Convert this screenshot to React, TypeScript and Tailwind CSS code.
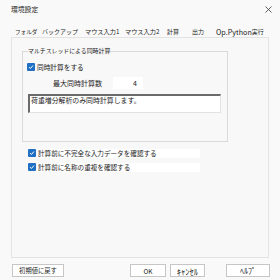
import React from "react";

const font = { fontFamily: '"Noto Sans CJK JP", "Noto Sans", sans-serif' };

function Check({ label, bg }: { label: string; bg?: boolean }) {
  return (
    <div className="flex items-center h-[10px]">
      <div className="w-[8px] h-[8px] rounded-[1px] bg-[#1f6fc5] flex items-center justify-center shrink-0">
        <svg width="6" height="6" viewBox="0 0 6 6">
          <path d="M1 3.1 L2.4 4.5 L5 1.5" stroke="white" strokeWidth="1" fill="none" />
        </svg>
      </div>
      <div
        className={`ml-[1px] pl-[1px] h-[9px] flex items-center whitespace-nowrap ${bg ? "bg-white w-[163px]" : ""}`}
      >
        {label}
      </div>
    </div>
  );
}

function Btn({ label, w, ml, size }: { label: string; w: string; ml?: string; size: string }) {
  return (
    <div
      className={`${w} ${ml ?? ""} ${size} h-[13px] border border-[#c6c6c6] bg-white flex items-center justify-center whitespace-nowrap`}
    >
      {label}
    </div>
  );
}

export default function App() {
  const tabs: { t: React.ReactNode; w: string; sel?: boolean }[] = [
    { t: "フォルダ", w: "w-[27px] text-[5.6px]" },
    { t: "バックアップ", w: "w-[43px] text-[6px]" },
    { t: "マウス入力1", w: "w-[40px] text-[6.2px]" },
    { t: "マウス入力2", w: "w-[42px] text-[6.2px]" },
    { t: "計算", w: "w-[25px] text-[6px]", sel: true },
    { t: "出力", w: "w-[24px] text-[6px]" },
    {
      t: (
        <>
          <span className="text-[7.2px]">Op.Python</span>
          <span className="text-[6px]">実行</span>
        </>
      ),
      w: "w-[52px]",
    },
  ];
  return (
    <div className="w-[280px] h-[280px] bg-[#f9f9f9] text-[7px] leading-[10px] text-[#1b1b1b] flex flex-col" style={font}>
      <div className="h-[18px] flex items-center justify-between pl-[11px] pr-[8px]">
        <span className="whitespace-nowrap text-[6.8px]">環境設定</span>
        <svg width="7" height="7" viewBox="0 0 7 7">
          <path d="M0.5 0.5 L6.5 6.5 M6.5 0.5 L0.5 6.5" stroke="#3a3a3a" strokeWidth="0.8" />
        </svg>
      </div>
      <div className="h-[19px] flex items-center pl-[15px] pt-[8px]">
        {tabs.map((tab, i) => (
          <div key={i} className={`${tab.w} h-[11px] flex items-center whitespace-nowrap`}>
            {tab.t}
          </div>
        ))}
      </div>
      <div className="mx-[11px] h-[221px] border border-[#e3e3e3] bg-[#f8f8f8] flex flex-col">
        <div className="relative ml-[10px] mt-[13px] w-[206px] h-[91px] border border-[#dadada] flex flex-col">
          <div className="absolute left-[5px] top-[-6px] px-[0px] bg-[#f8f8f8] text-[5.9px] leading-[10px] whitespace-nowrap">
            マルチスレッドによる同時計算
          </div>
          <div className="ml-[4px] mt-[10px] text-[6.7px]">
            <Check label="同時計算をする" />
          </div>
          <div className="flex items-center ml-[30px] mt-[5px] h-[12px]">
            <span className="w-[60px] whitespace-nowrap text-[7px]">最大同時計算数</span>
            <div className="w-[30px] h-[12px] bg-white flex items-center justify-end pr-[6px] text-[7px]">4</div>
          </div>
          <div className="ml-[5px] mt-[5px] w-[193px] h-[19px] bg-white border-t-[2px] border-l-[2px] border-t-[#6a6a6a] border-l-[#6a6a6a] border-b border-r border-b-[#e2e2e2] border-r-[#e2e2e2] pl-[1px] leading-[9px] text-[6.9px] whitespace-nowrap">
            荷重増分解析のみ同時計算します。
          </div>
        </div>
        <div className="ml-[16px] mt-[6px] flex flex-col gap-[4px] text-[6.6px]">
          <Check label="計算前に不完全な入力データを確認する" bg />
          <Check label="計算前に名称の重複を確認する" bg />
        </div>
      </div>
      <div className="flex mt-[6px] pl-[12px]">
        <Btn label="初期値に戻す" w="w-[52px]" size="text-[6.3px]" />
        <Btn label="OK" w="w-[36px]" ml="ml-[66px]" size="text-[6.5px]" />
        <Btn label="ｷｬﾝｾﾙ" w="w-[35px]" ml="ml-[4px]" size="text-[8.5px]" />
        <Btn label="ﾍﾙﾌﾟ" w="w-[44px]" ml="ml-[21px]" size="text-[8px]" />
      </div>
    </div>
  );
}
